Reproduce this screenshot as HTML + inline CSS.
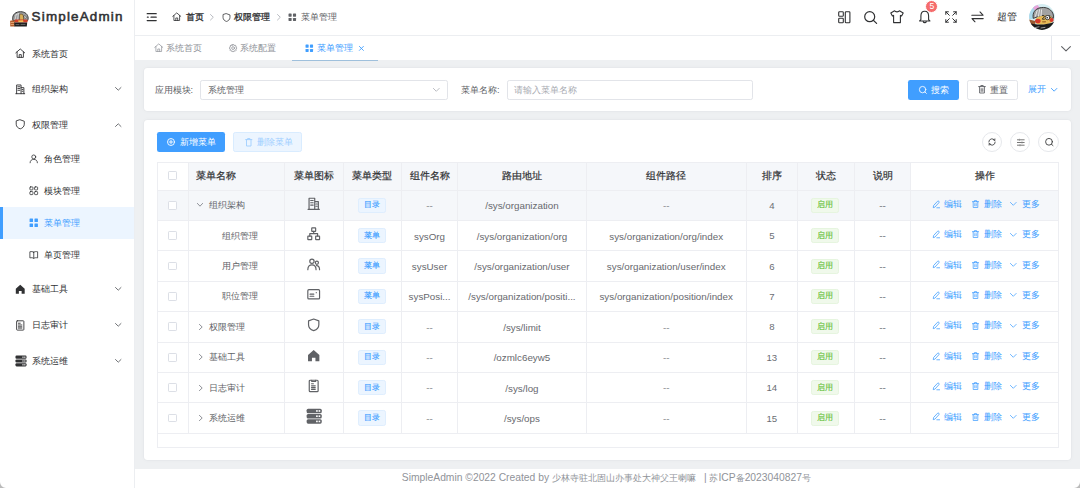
<!DOCTYPE html>
<html><head><meta charset="utf-8"><title>SimpleAdmin</title>
<style>
*{box-sizing:border-box;margin:0;padding:0}
html,body{width:1080px;height:488px;overflow:hidden}
body{position:relative;background:#eef0f2;font-family:"Liberation Sans", sans-serif;color:#606266}
.a{position:absolute}
.t{position:absolute;white-space:nowrap;line-height:12px;height:12px}
svg{position:absolute;overflow:visible}
.cj{display:inline-block;text-align:justify;text-align-last:justify;vertical-align:baseline;overflow:visible}
</style></head>
<body>
<div class="a" style="left:0.00px;top:0.00px;width:134.50px;height:488.00px;background:#fff;border-right:1px solid #eceef1"></div>
<svg style="left:9.80px;top:10.60px" width="18.4" height="15.6" viewBox="0 0 18.4 15.6" fill="none" stroke="none" stroke-width="1" stroke-linecap="round" stroke-linejoin="round">
<path d="M2.8 9 C2 5 4 1.5 9 0.8 C13.5 0.2 17.2 2.2 18 5.8 C18.4 7.5 18 9 17.6 9.6 L3.2 9.8 Z" fill="#9c9c9c" stroke="#2a2a2a" stroke-width="0.9"/>
<path d="M5 8.5 L6.2 3.6 M7.6 8.6 L8.4 2.8 M5.8 4 L8.6 2.4" stroke="#e8e8e8" stroke-width="0.7"/>
<path d="M10 3.2 C11.5 2.6 13.2 3.4 13.4 5 L13.6 9.6 L10 9.6 Z" fill="#d9b25a" stroke="#3a2a10" stroke-width="0.5"/>
<path d="M14 5 C15.2 4.6 16.4 5.4 16.3 6.6 C15.5 7.6 14.3 7.3 14 6.2 Z" fill="#f4f4f4" stroke="#222" stroke-width="0.5"/>
<rect x="4.6" y="8.6" width="13" height="3" rx="0.8" fill="#d2402a"/>
<path d="M8 9.4 L13 9.2 L13.5 11 L8.6 11.2 Z" fill="#f0c050"/>
<rect x="0.2" y="9.6" width="4.6" height="6" rx="0.6" fill="#b5602e"/>
<path d="M1.2 11.5 H3.6 M1.2 13.5 H3.6" stroke="#ffd0a0" stroke-width="0.6"/>
<path d="M4.2 11.6 H17.2 L16.8 15.4 H4.4 Z" fill="#1d1d1d"/>
<path d="M6 13.6 H9 M11 13.4 H15" stroke="#9a9a9a" stroke-width="0.6"/>
</svg>
<div class="t" style="left:31.60px;top:11.20px;font-size:13.4px;color:#303133;font-weight:normal;letter-spacing:1.2px;-webkit-text-stroke:0.55px #303133">SimpleAdmin</div>
<div class="a" style="left:0.00px;top:206.80px;width:134.00px;height:32.00px;background:#ecf5ff"></div>
<div class="a" style="left:0.00px;top:206.80px;width:2.80px;height:32.00px;background:#409eff"></div>
<svg style="left:15.00px;top:48.45px" width="10.5" height="10.5" viewBox="0 0 13 13" fill="none" stroke="#303133" stroke-width="1.1" stroke-linecap="round" stroke-linejoin="round"><path d="M1 6 L6.5 1.2 L12 6 M2.6 4.8 V11.6 H10.4 V4.8 M5.2 11.6 V8.2 H7.8 V11.6"/></svg>
<div class="t" style="left:31.50px;top:47.70px;font-size:9px;color:#303133;font-weight:normal;"><span class="cj" style="width:36px">系统首页</span></div>
<svg style="left:15.00px;top:83.65px" width="10.5" height="10.5" viewBox="0 0 13 13" fill="none" stroke="#303133" stroke-width="1.1" stroke-linecap="round" stroke-linejoin="round"><path d="M1 12 H12 M2 12 V1.2 H7.5 V12 M7.5 4.5 H11 V12 M3.6 3.4 H6 M3.6 5.6 H6 M3.6 7.8 H6 M8.8 6.8 H9.8 M8.8 9 H9.8"/></svg>
<div class="t" style="left:31.50px;top:82.90px;font-size:9px;color:#303133;font-weight:normal;"><span class="cj" style="width:36px">组织架构</span></div>
<svg style="left:114.50px;top:86.90px" width="6.5" height="4" viewBox="0 0 6.5 4" fill="none" stroke="#606266" stroke-width="0.9" stroke-linecap="round" stroke-linejoin="round"><path d="M0.5 0.5 L3.25 3.2 L6 0.5"/></svg>
<svg style="left:15.00px;top:119.45px" width="10.5" height="10.5" viewBox="0 0 13 13" fill="none" stroke="#303133" stroke-width="1.1" stroke-linecap="round" stroke-linejoin="round"><path d="M6.5 1 L11.5 2.8 V6.5 C11.5 9.5 9 11.5 6.5 12.2 C4 11.5 1.5 9.5 1.5 6.5 V2.8 Z"/></svg>
<div class="t" style="left:31.50px;top:118.70px;font-size:9px;color:#303133;font-weight:normal;"><span class="cj" style="width:36px">权限管理</span></div>
<svg style="left:114.50px;top:122.70px" width="6.5" height="4" viewBox="0 0 6.5 4" fill="none" stroke="#606266" stroke-width="0.9" stroke-linecap="round" stroke-linejoin="round"><path d="M0.5 3.5 L3.25 0.8 L6 3.5"/></svg>
<svg style="left:28.50px;top:153.85px" width="9.5" height="9.5" viewBox="0 0 13 13" fill="none" stroke="#303133" stroke-width="1.1" stroke-linecap="round" stroke-linejoin="round"><circle cx="6.5" cy="4" r="2.7"/><path d="M1.5 12 C1.5 8.8 3.6 7.4 6.5 7.4 C9.4 7.4 11.5 8.8 11.5 12"/></svg>
<div class="t" style="left:43.80px;top:152.60px;font-size:9px;color:#303133;font-weight:normal;"><span class="cj" style="width:36px">角色管理</span></div>
<svg style="left:28.50px;top:185.85px" width="9.5" height="9.5" viewBox="0 0 13 13" fill="none" stroke="#303133" stroke-width="1.1" stroke-linecap="round" stroke-linejoin="round"><rect x="1.2" y="1.2" width="4.2" height="4.2" rx="1"/><rect x="7.6" y="1.2" width="4.2" height="4.2" rx="1"/><rect x="1.2" y="7.6" width="4.2" height="4.2" rx="1"/><rect x="7.6" y="7.6" width="4.2" height="4.2" rx="1"/></svg>
<div class="t" style="left:43.80px;top:184.60px;font-size:9px;color:#303133;font-weight:normal;"><span class="cj" style="width:36px">模块管理</span></div>
<svg style="left:28.50px;top:217.75px" width="9.5" height="9.5" viewBox="0 0 13 13" fill="#409eff" stroke="#409eff" stroke-width="1.1" stroke-linecap="round" stroke-linejoin="round"><rect x="0.8" y="0.8" width="4.7" height="4.7" rx="0.7" stroke="none"/><rect x="7.5" y="0.8" width="4.7" height="4.7" rx="0.7" stroke="none"/><rect x="0.8" y="7.5" width="4.7" height="4.7" rx="0.7" stroke="none"/><rect x="7.5" y="7.5" width="4.7" height="4.7" rx="0.7" stroke="none"/></svg>
<div class="t" style="left:43.80px;top:216.50px;font-size:9px;color:#409eff;font-weight:normal;"><span class="cj" style="width:36px">菜单管理</span></div>
<svg style="left:28.50px;top:249.75px" width="9.5" height="9.5" viewBox="0 0 13 13" fill="none" stroke="#303133" stroke-width="1.1" stroke-linecap="round" stroke-linejoin="round"><path d="M6.5 3 C5 2 3 2 1.2 2.4 V10.8 C3 10.4 5 10.4 6.5 11.4 C8 10.4 10 10.4 11.8 10.8 V2.4 C10 2 8 2 6.5 3 Z M6.5 3 V11.4"/></svg>
<div class="t" style="left:43.80px;top:248.50px;font-size:9px;color:#303133;font-weight:normal;"><span class="cj" style="width:36px">单页管理</span></div>
<svg style="left:15.00px;top:283.95px" width="10.5" height="10.5" viewBox="0 0 13 13" fill="#303133" stroke="#303133" stroke-width="1.1" stroke-linecap="round" stroke-linejoin="round"><path d="M6.5 1 L12 5.8 V12 H8.2 V8.6 H4.8 V12 H1 V5.8 Z" stroke="none"/></svg>
<div class="t" style="left:31.50px;top:283.20px;font-size:9px;color:#303133;font-weight:normal;"><span class="cj" style="width:36px">基础工具</span></div>
<svg style="left:114.50px;top:287.20px" width="6.5" height="4" viewBox="0 0 6.5 4" fill="none" stroke="#606266" stroke-width="0.9" stroke-linecap="round" stroke-linejoin="round"><path d="M0.5 0.5 L3.25 3.2 L6 0.5"/></svg>
<svg style="left:15.00px;top:319.55px" width="10.5" height="10.5" viewBox="0 0 13 13" fill="none" stroke="#303133" stroke-width="1.1" stroke-linecap="round" stroke-linejoin="round"><rect x="2" y="1" width="9" height="11.5" rx="0.8"/><path d="M4.2 4 H6.5 M4.2 6.2 H8.5 M4.2 8.4 H8.5 M4.2 10 H8.5"/></svg>
<div class="t" style="left:31.50px;top:318.80px;font-size:9px;color:#303133;font-weight:normal;"><span class="cj" style="width:36px">日志审计</span></div>
<svg style="left:114.50px;top:322.80px" width="6.5" height="4" viewBox="0 0 6.5 4" fill="none" stroke="#606266" stroke-width="0.9" stroke-linecap="round" stroke-linejoin="round"><path d="M0.5 0.5 L3.25 3.2 L6 0.5"/></svg>
<svg style="left:14.80px;top:354.60px" width="12" height="12" viewBox="0 0 13 13" fill="#303133" stroke="#303133" stroke-width="1.1" stroke-linecap="round" stroke-linejoin="round"><rect x="0.5" y="0.6" width="12" height="3.5" rx="1.2" stroke="none"/><rect x="0.5" y="4.75" width="12" height="3.5" rx="1.2" stroke="none"/><rect x="0.5" y="8.9" width="12" height="3.5" rx="1.2" stroke="none"/><rect x="8.0" y="1.7" width="1.3" height="1.3" fill="#fff" stroke="none"/><rect x="10.0" y="1.7" width="1.3" height="1.3" fill="#fff" stroke="none"/><rect x="8.0" y="5.85" width="1.3" height="1.3" fill="#fff" stroke="none"/><rect x="10.0" y="5.85" width="1.3" height="1.3" fill="#fff" stroke="none"/><rect x="8.0" y="10.0" width="1.3" height="1.3" fill="#fff" stroke="none"/><rect x="10.0" y="10.0" width="1.3" height="1.3" fill="#fff" stroke="none"/></svg>
<div class="t" style="left:31.50px;top:354.60px;font-size:9px;color:#303133;font-weight:normal;"><span class="cj" style="width:36px">系统运维</span></div>
<svg style="left:114.50px;top:358.60px" width="6.5" height="4" viewBox="0 0 6.5 4" fill="none" stroke="#606266" stroke-width="0.9" stroke-linecap="round" stroke-linejoin="round"><path d="M0.5 0.5 L3.25 3.2 L6 0.5"/></svg>
<div class="a" style="left:134.50px;top:0.00px;width:945.50px;height:35.50px;background:#fff;border-bottom:1px solid #eceef1"></div>
<svg style="left:146.00px;top:12.70px" width="11" height="9" viewBox="0 0 11 9" fill="none" stroke="#303133" stroke-width="1.25" stroke-linecap="round" stroke-linejoin="round"><path d="M1.2 0.7 H10.2 M5 4.2 H10.2 M1.2 7.6 H10.2 M1.4 4.2 H2.2"/></svg>
<svg style="left:171.80px;top:12.45px" width="9.5" height="9.5" viewBox="0 0 13 13" fill="none" stroke="#303133" stroke-width="1.1" stroke-linecap="round" stroke-linejoin="round"><path d="M1 6 L6.5 1.2 L12 6 M2.6 4.8 V11.6 H10.4 V4.8 M5.2 11.6 V8.2 H7.8 V11.6"/></svg>
<div class="t" style="left:186.30px;top:11.40px;font-size:9px;color:#303133;font-weight:normal;-webkit-text-stroke:0.3px #303133"><span class="cj" style="width:18px">首页</span></div>
<svg style="left:210.40px;top:14.20px" width="4" height="6.5" viewBox="0 0 4 6.5" fill="none" stroke="#a8abb2" stroke-width="0.8" stroke-linecap="round" stroke-linejoin="round"><path d="M0.5 0.5 L3.3 3.25 L0.5 6"/></svg>
<svg style="left:221.50px;top:12.70px" width="9" height="9" viewBox="0 0 13 13" fill="none" stroke="#303133" stroke-width="1.1" stroke-linecap="round" stroke-linejoin="round"><path d="M6.5 1 L11.5 2.8 V6.5 C11.5 9.5 9 11.5 6.5 12.2 C4 11.5 1.5 9.5 1.5 6.5 V2.8 Z"/></svg>
<div class="t" style="left:234.40px;top:11.40px;font-size:9px;color:#303133;font-weight:normal;-webkit-text-stroke:0.3px #303133"><span class="cj" style="width:36px">权限管理</span></div>
<svg style="left:276.60px;top:14.20px" width="4" height="6.5" viewBox="0 0 4 6.5" fill="none" stroke="#a8abb2" stroke-width="0.8" stroke-linecap="round" stroke-linejoin="round"><path d="M0.5 0.5 L3.3 3.25 L0.5 6"/></svg>
<svg style="left:287.60px;top:12.90px" width="8.6" height="8.6" viewBox="0 0 13 13" fill="#606266" stroke="#606266" stroke-width="1.1" stroke-linecap="round" stroke-linejoin="round"><rect x="0.8" y="0.8" width="4.7" height="4.7" rx="0.7" stroke="none"/><rect x="7.5" y="0.8" width="4.7" height="4.7" rx="0.7" stroke="none"/><rect x="0.8" y="7.5" width="4.7" height="4.7" rx="0.7" stroke="none"/><rect x="7.5" y="7.5" width="4.7" height="4.7" rx="0.7" stroke="none"/></svg>
<div class="t" style="left:300.60px;top:11.40px;font-size:9px;color:#606266;font-weight:normal;"><span class="cj" style="width:36px">菜单管理</span></div>
<svg style="left:837.80px;top:11.00px" width="12.5" height="12.5" viewBox="0 0 12.5 12.5" fill="none" stroke="#303133" stroke-width="1.1" stroke-linecap="round" stroke-linejoin="round"><rect x="0.7" y="0.7" width="4.6" height="4.6" rx="0.8"/><rect x="0.7" y="7.2" width="4.6" height="4.6" rx="0.8"/><rect x="7.3" y="0.7" width="4.6" height="11.1" rx="0.8"/></svg>
<svg style="left:863.70px;top:11.00px" width="13.5" height="13" viewBox="0 0 13.5 13" fill="none" stroke="#303133" stroke-width="1.2" stroke-linecap="round" stroke-linejoin="round"><circle cx="5.7" cy="5.7" r="5"/><path d="M9.3 9.3 L12.6 12.4"/></svg>
<svg style="left:890.20px;top:9.80px" width="14" height="13.4" viewBox="0 0 14 13.4" fill="none" stroke="#303133" stroke-width="1.1" stroke-linecap="round" stroke-linejoin="round"><path d="M4.6 0.8 C5.2 2.2 8.8 2.2 9.4 0.8 L13.2 3 L11.6 6 L10.4 5.4 V12.6 H3.6 V5.4 L2.4 6 L0.8 3 Z"/></svg>
<svg style="left:919.00px;top:10.40px" width="11.5" height="13.4" viewBox="0 0 11.5 13.4" fill="none" stroke="#303133" stroke-width="1.1" stroke-linecap="round" stroke-linejoin="round"><path d="M5.75 1.2 C8.6 1.2 9.6 3.5 9.6 6 V9.6 L10.9 11 H0.6 L1.9 9.6 V6 C1.9 3.5 2.9 1.2 5.75 1.2 Z M4.3 11.8 C4.6 12.9 6.9 12.9 7.2 11.8"/></svg>
<div class="a" style="left:925.20px;top:0.00px;width:13.20px;height:13.20px;background:#f56c6c;border-radius:50%;border:1px solid #fff"></div>
<div class="t" style="left:925.8px;top:1.1px;width:12px;text-align:center;font-size:8.6px;line-height:11px;height:11px;color:#fff">5</div>
<svg style="left:945.00px;top:11.00px" width="12" height="12" viewBox="0 0 12 12" fill="none" stroke="#303133" stroke-width="1.0" stroke-linecap="round" stroke-linejoin="round"><path d="M0.8 3.4 V0.8 H3.4 M0.8 0.8 L4.3 4.3 M8.6 0.8 H11.2 V3.4 M11.2 0.8 L7.7 4.3 M0.8 8.6 V11.2 H3.4 M0.8 11.2 L4.3 7.7 M11.2 8.6 V11.2 H8.6 M11.2 11.2 L7.7 7.7"/></svg>
<svg style="left:971.00px;top:11.40px" width="13" height="11.7" viewBox="0 0 13 11.7" fill="none" stroke="#303133" stroke-width="1.1" stroke-linecap="round" stroke-linejoin="round"><path d="M0.8 4.2 H12 L9 1 M12.2 7.6 H1 L4 10.8"/></svg>
<div class="t" style="left:996.70px;top:11.20px;font-size:9.5px;color:#303133;font-weight:normal;"><span class="cj" style="width:20px">超管</span></div>
<svg style="left:1029.10px;top:4.20px" width="26" height="26" viewBox="0 0 26 26" fill="none" stroke="none" stroke-width="1" stroke-linecap="round" stroke-linejoin="round">
<defs><clipPath id="avc"><circle cx="13" cy="13" r="12.9"/></clipPath></defs>
<g clip-path="url(#avc)">
<rect x="0" y="0" width="26" height="26" fill="#d6eef2"/>
<path d="M0 3 L6 0 L10 6 L4 15 L0 15 Z" fill="#a9d7ea"/>
<path d="M3.6 3.4 L8.4 0.8 L11.2 4.6 L6.6 7 Z" fill="#e8a4da"/>
<path d="M4.2 14 C3.2 8.6 6.2 5 11 3.8 C15.6 2.8 20 4 22.6 7.2 C24.6 9.6 24.8 12.6 24.2 14.6 L20.6 11.6 L14 12.4 L9 12.8 Z" fill="#a2a2a2" stroke="#2c2c2c" stroke-width="0.9"/>
<path d="M6.4 12.4 L8.2 6.4 M9.4 12.4 L10.6 5.6 M12 11.8 L12.6 5.8" stroke="#ececec" stroke-width="0.9"/>
<path d="M7 14.4 C9.6 11.4 17 10.6 22.4 12.4 L23.2 18 C19 21.4 10.4 21.4 7 19.2 Z" fill="#e6bb58"/>
<ellipse cx="18.6" cy="13.6" rx="2.4" ry="2.1" fill="#fafafa" stroke="#1e1e1e" stroke-width="0.8"/>
<circle cx="18.2" cy="13.8" r="0.8" fill="#111"/>
<path d="M13.2 11.6 C14.4 10.8 15.6 11.8 15.2 13 C14.4 13.8 13.4 14 13.4 15.2 L15.4 15.2" stroke="#222" stroke-width="0.9" fill="none"/>
<ellipse cx="8.8" cy="17" rx="2.8" ry="2.3" fill="#d63a2a"/>
<ellipse cx="22.6" cy="16" rx="2.1" ry="2.1" fill="#d63a2a"/>
<path d="M13 17.2 L17 17 L16.6 18.6 L13.4 18.6 Z" fill="#a8702a"/>
<path d="M0 15.6 L6.4 17 L6.2 22.4 L0 22.4 Z" fill="#9a5a32"/>
<path d="M2.4 19.4 C9 21.2 18 21 26 17.4 L26 26 L0 26 L0 21.4 Z" fill="#1b1b1b"/>
<path d="M6 23.6 L10 22.8 M12 24 L16 23.4" stroke="#cfcfcf" stroke-width="0.7"/>
</g>
</svg>
<div class="a" style="left:134.50px;top:35.50px;width:945.50px;height:24.10px;background:#fff"></div>
<div class="a" style="left:1051.20px;top:35.50px;width:1.00px;height:24.10px;background:#e4e7ed"></div>
<svg style="left:1061.00px;top:45.60px" width="10" height="5.6" viewBox="0 0 10 5.6" fill="none" stroke="#606266" stroke-width="1.1" stroke-linecap="round" stroke-linejoin="round"><path d="M0.6 0.6 L5 4.9 L9.4 0.6"/></svg>
<svg style="left:154.40px;top:43.45px" width="9.5" height="9.5" viewBox="0 0 13 13" fill="none" stroke="#909399" stroke-width="1.0" stroke-linecap="round" stroke-linejoin="round"><path d="M1 6 L6.5 1.2 L12 6 M2.6 4.8 V11.6 H10.4 V4.8 M5.2 11.6 V8.2 H7.8 V11.6"/></svg>
<div class="t" style="left:166.40px;top:41.80px;font-size:9px;color:#909399;font-weight:normal;"><span class="cj" style="width:36px">系统首页</span></div>
<svg style="left:228.60px;top:43.90px" width="8.2" height="8.2" viewBox="0 0 8.2 8.2" fill="none" stroke="#909399" stroke-width="0.8" stroke-linecap="round" stroke-linejoin="round"><path d="M3.3 0.6 H4.9 L5.2 1.6 L6.2 1.1 L7.2 2.1 L6.7 3.1 L7.6 3.4 V4.9 L6.7 5.2 L7.2 6.2 L6.2 7.2 L5.2 6.7 L4.9 7.6 H3.3 L3 6.7 L2 7.2 L1 6.2 L1.5 5.2 L0.6 4.9 V3.3 L1.5 3 L1 2 L2 1 L3 1.5 Z"/><circle cx="4.1" cy="4.1" r="1.4"/></svg>
<div class="t" style="left:239.70px;top:41.80px;font-size:9px;color:#909399;font-weight:normal;"><span class="cj" style="width:36px">系统配置</span></div>
<svg style="left:305.40px;top:43.90px" width="8.6" height="8.6" viewBox="0 0 13 13" fill="#409eff" stroke="#409eff" stroke-width="1.1" stroke-linecap="round" stroke-linejoin="round"><rect x="0.8" y="0.8" width="4.7" height="4.7" rx="0.7" stroke="none"/><rect x="7.5" y="0.8" width="4.7" height="4.7" rx="0.7" stroke="none"/><rect x="0.8" y="7.5" width="4.7" height="4.7" rx="0.7" stroke="none"/><rect x="7.5" y="7.5" width="4.7" height="4.7" rx="0.7" stroke="none"/></svg>
<div class="t" style="left:316.80px;top:41.80px;font-size:9px;color:#409eff;font-weight:normal;"><span class="cj" style="width:36px">菜单管理</span></div>
<svg style="left:359.30px;top:45.60px" width="4.8" height="4.8" viewBox="0 0 4.8 4.8" fill="none" stroke="#409eff" stroke-width="0.9" stroke-linecap="round" stroke-linejoin="round"><path d="M0.4 0.4 L4.4 4.4 M4.4 0.4 L0.4 4.4"/></svg>
<div class="a" style="left:292.20px;top:59.80px;width:85.40px;height:1.40px;background:#9fc0dc"></div>
<div class="a" style="left:143.80px;top:68.30px;width:927.20px;height:43.00px;background:#fff;border-radius:3.4px;box-shadow:0 0 0 0.6px #e4e6e9,0 0 5px rgba(0,0,0,0.035)"></div>
<div class="t" style="left:154.50px;top:83.70px;font-size:9px;color:#606266;font-weight:normal;"><span class="cj" style="width:36px">应用模块</span>:</div>
<div class="a" style="left:200.00px;top:79.80px;width:247.50px;height:19.80px;background:#fff;border:1px solid #e2e4e9;border-radius:2.3px"></div>
<div class="t" style="left:207.50px;top:83.60px;font-size:9px;color:#606266;font-weight:normal;"><span class="cj" style="width:36px">系统管理</span></div>
<svg style="left:433.20px;top:88.20px" width="6.6" height="3.8" viewBox="0 0 6.6 3.8" fill="none" stroke="#a8abb2" stroke-width="0.8" stroke-linecap="round" stroke-linejoin="round"><path d="M0.4 0.4 L3.3 3.3 L6.2 0.4"/></svg>
<div class="t" style="left:461.00px;top:83.70px;font-size:9px;color:#606266;font-weight:normal;"><span class="cj" style="width:36px">菜单名称</span>:</div>
<div class="a" style="left:506.70px;top:79.80px;width:246.80px;height:19.80px;background:#fff;border:1px solid #e2e4e9;border-radius:2.3px"></div>
<div class="t" style="left:514.00px;top:83.60px;font-size:9px;color:#a8abb2;font-weight:normal;"><span class="cj" style="width:63px">请输入菜单名称</span></div>
<div class="a" style="left:908.00px;top:79.50px;width:50.80px;height:20.00px;background:#409eff;border-radius:2.3px"></div>
<svg style="left:919.00px;top:85.60px" width="8" height="8" viewBox="0 0 8 8" fill="none" stroke="#fff" stroke-width="0.85" stroke-linecap="round" stroke-linejoin="round"><circle cx="3.6" cy="3.6" r="3.2"/><path d="M5.9 5.9 L7.4 7.4"/></svg>
<div class="t" style="left:930.80px;top:83.50px;font-size:9px;color:#fff;font-weight:normal;"><span class="cj" style="width:18px">搜索</span></div>
<div class="a" style="left:967.20px;top:79.50px;width:50.80px;height:20.00px;background:#fff;border:1px solid #e2e4e9;border-radius:2.3px"></div>
<svg style="left:978.30px;top:85.40px" width="8" height="8.5" viewBox="0 0 8 8.5" fill="none" stroke="#606266" stroke-width="0.9" stroke-linecap="round" stroke-linejoin="round"><path d="M0.6 1.6 H7.4 M2.8 1.6 V0.5 H5.2 V1.6 M1.6 1.6 V8 H6.4 V1.6 M3.2 3.6 V6.4 M4.8 3.6 V6.4"/></svg>
<div class="t" style="left:990.00px;top:83.50px;font-size:9px;color:#606266;font-weight:normal;"><span class="cj" style="width:18px">重置</span></div>
<div class="t" style="left:1028.30px;top:83.20px;font-size:9px;color:#409eff;font-weight:normal;"><span class="cj" style="width:18px">展开</span></div>
<svg style="left:1050.80px;top:88.20px" width="6.3" height="3.6" viewBox="0 0 6.3 3.6" fill="none" stroke="#409eff" stroke-width="0.9" stroke-linecap="round" stroke-linejoin="round"><path d="M0.4 0.4 L3.15 3.2 L5.9 0.4"/></svg>
<div class="a" style="left:143.80px;top:119.90px;width:927.20px;height:340.60px;background:#fff;border-radius:3.4px;box-shadow:0 0 0 0.6px #e4e6e9,0 0 5px rgba(0,0,0,0.035)"></div>
<div class="a" style="left:156.60px;top:132.00px;width:68.80px;height:20.10px;background:#409eff;border-radius:2.3px"></div>
<svg style="left:167.00px;top:138.20px" width="8" height="8" viewBox="0 0 8 8" fill="none" stroke="#fff" stroke-width="0.9" stroke-linecap="round" stroke-linejoin="round"><circle cx="4" cy="4" r="3.5"/><path d="M4 2.2 V5.8 M2.2 4 H5.8"/></svg>
<div class="t" style="left:179.70px;top:136.00px;font-size:9px;color:#fff;font-weight:normal;"><span class="cj" style="width:36px">新增菜单</span></div>
<div class="a" style="left:233.20px;top:132.00px;width:69.20px;height:20.10px;background:#ecf5ff;border:1px solid #d9ecff;border-radius:2.3px"></div>
<svg style="left:244.50px;top:137.80px" width="7.5" height="8.5" viewBox="0 0 7.5 8.5" fill="none" stroke="#a0cfff" stroke-width="0.9" stroke-linecap="round" stroke-linejoin="round"><path d="M0.6 1.6 H6.9 M2.6 1.6 V0.5 H4.9 V1.6 M1.5 1.6 V8 H6 V1.6"/></svg>
<div class="t" style="left:256.50px;top:136.00px;font-size:9px;color:#a0cfff;font-weight:normal;"><span class="cj" style="width:36px">删除菜单</span></div>
<div class="a" style="left:981.80px;top:131.90px;width:20.20px;height:20.20px;border:1px solid #e6e8ec;border-radius:50%"></div>
<div class="a" style="left:1010.20px;top:131.90px;width:20.20px;height:20.20px;border:1px solid #e6e8ec;border-radius:50%"></div>
<div class="a" style="left:1038.40px;top:131.90px;width:20.20px;height:20.20px;border:1px solid #e6e8ec;border-radius:50%"></div>
<svg style="left:988.00px;top:138.20px" width="8" height="8" viewBox="0 0 8 8" fill="none" stroke="#303133" stroke-width="0.8" stroke-linecap="round" stroke-linejoin="round"><path d="M0.8 4 A3.2 3.2 0 0 1 6.77 2.4 M6.9 0.9 L6.77 2.4 L5.41 1.77 M7.2 4 A3.2 3.2 0 0 1 1.23 5.6 M1.1 7.1 L1.23 5.6 L2.59 6.23"/></svg>
<svg style="left:1016.60px;top:139.00px" width="7.6" height="7" viewBox="0 0 7.6 7" fill="none" stroke="#303133" stroke-width="0.8" stroke-linecap="round" stroke-linejoin="round"><path d="M0.4 0.8 H7.2 M0.4 3.5 H7.2 M0.4 6.2 H7.2" stroke="#555" stroke-width="0.8"/><path d="M2.4 0.1 V1.5 M5 2.8 V4.2 M3 5.5 V6.9" stroke="#888" stroke-width="0.7"/></svg>
<svg style="left:1044.60px;top:138.40px" width="8.6" height="8" viewBox="0 0 8.6 8" fill="none" stroke="#303133" stroke-width="0.85" stroke-linecap="round" stroke-linejoin="round"><circle cx="4" cy="3.8" r="3.4"/><path d="M6.5 6.3 L8 7.6"/></svg>
<div class="a" style="left:188.30px;top:162.10px;width:722.50px;height:27.90px;background:#f5f7fa"></div>
<div class="a" style="left:156.60px;top:190.00px;width:902.00px;height:30.41px;background:#f5f7fa"></div>
<div class="a" style="left:156.60px;top:162.10px;width:902.00px;height:285.50px;border:1px solid #edeef2"></div>
<div class="a" style="left:156.60px;top:189.50px;width:902.00px;height:1.00px;background:#edeef2"></div>
<div class="a" style="left:156.60px;top:219.91px;width:902.00px;height:1.00px;background:#edeef2"></div>
<div class="a" style="left:156.60px;top:250.32px;width:902.00px;height:1.00px;background:#edeef2"></div>
<div class="a" style="left:156.60px;top:280.73px;width:902.00px;height:1.00px;background:#edeef2"></div>
<div class="a" style="left:156.60px;top:311.14px;width:902.00px;height:1.00px;background:#edeef2"></div>
<div class="a" style="left:156.60px;top:341.55px;width:902.00px;height:1.00px;background:#edeef2"></div>
<div class="a" style="left:156.60px;top:371.96px;width:902.00px;height:1.00px;background:#edeef2"></div>
<div class="a" style="left:156.60px;top:402.37px;width:902.00px;height:1.00px;background:#edeef2"></div>
<div class="a" style="left:156.60px;top:432.78px;width:902.00px;height:1.00px;background:#edeef2"></div>
<div class="a" style="left:187.80px;top:162.10px;width:1.00px;height:271.18px;background:#edeef2"></div>
<div class="a" style="left:283.90px;top:162.10px;width:1.00px;height:271.18px;background:#edeef2"></div>
<div class="a" style="left:343.00px;top:162.10px;width:1.00px;height:271.18px;background:#edeef2"></div>
<div class="a" style="left:400.80px;top:162.10px;width:1.00px;height:271.18px;background:#edeef2"></div>
<div class="a" style="left:457.30px;top:162.10px;width:1.00px;height:271.18px;background:#edeef2"></div>
<div class="a" style="left:585.60px;top:162.10px;width:1.00px;height:271.18px;background:#edeef2"></div>
<div class="a" style="left:745.80px;top:162.10px;width:1.00px;height:271.18px;background:#edeef2"></div>
<div class="a" style="left:796.90px;top:162.10px;width:1.00px;height:271.18px;background:#edeef2"></div>
<div class="a" style="left:853.70px;top:162.10px;width:1.00px;height:271.18px;background:#edeef2"></div>
<div class="a" style="left:910.30px;top:162.10px;width:1.00px;height:271.18px;background:#edeef2"></div>
<div class="a" style="left:167.90px;top:171.20px;width:8.80px;height:8.80px;background:#fff;border:1px solid #dcdfe6;border-radius:1.2px"></div>
<div class="t" style="left:195.80px;top:170.20px;font-size:9.6px;color:#303133;font-weight:normal;-webkit-text-stroke:0.2px #303133"><span class="cj" style="width:40px">菜单名称</span></div>
<div class="t" style="left:273.95px;top:170.20px;width:80px;text-align:center;font-size:9.6px;color:#303133;font-weight:normal;-webkit-text-stroke:0.2px #303133"><span class="cj" style="width:40px">菜单图标</span></div>
<div class="t" style="left:332.40px;top:170.20px;width:80px;text-align:center;font-size:9.6px;color:#303133;font-weight:normal;-webkit-text-stroke:0.2px #303133"><span class="cj" style="width:40px">菜单类型</span></div>
<div class="t" style="left:389.55px;top:170.20px;width:80px;text-align:center;font-size:9.6px;color:#303133;font-weight:normal;-webkit-text-stroke:0.2px #303133"><span class="cj" style="width:40px">组件名称</span></div>
<div class="t" style="left:481.95px;top:170.20px;width:80px;text-align:center;font-size:9.6px;color:#303133;font-weight:normal;-webkit-text-stroke:0.2px #303133"><span class="cj" style="width:40px">路由地址</span></div>
<div class="t" style="left:626.20px;top:170.20px;width:80px;text-align:center;font-size:9.6px;color:#303133;font-weight:normal;-webkit-text-stroke:0.2px #303133"><span class="cj" style="width:40px">组件路径</span></div>
<div class="t" style="left:731.85px;top:170.20px;width:80px;text-align:center;font-size:9.6px;color:#303133;font-weight:normal;-webkit-text-stroke:0.2px #303133"><span class="cj" style="width:20px">排序</span></div>
<div class="t" style="left:785.80px;top:170.20px;width:80px;text-align:center;font-size:9.6px;color:#303133;font-weight:normal;-webkit-text-stroke:0.2px #303133"><span class="cj" style="width:20px">状态</span></div>
<div class="t" style="left:842.50px;top:170.20px;width:80px;text-align:center;font-size:9.6px;color:#303133;font-weight:normal;-webkit-text-stroke:0.2px #303133"><span class="cj" style="width:20px">说明</span></div>
<div class="t" style="left:944.70px;top:170.20px;width:80px;text-align:center;font-size:9.6px;color:#303133;font-weight:normal;-webkit-text-stroke:0.2px #303133"><span class="cj" style="width:20px">操作</span></div>
<div class="a" style="left:167.90px;top:200.81px;width:8.80px;height:8.80px;background:#fff;border:1px solid #dcdfe6;border-radius:1.2px"></div>
<svg style="left:197.20px;top:203.41px" width="6" height="3.6" viewBox="0 0 6 3.6" fill="none" stroke="#83868c" stroke-width="0.9" stroke-linecap="round" stroke-linejoin="round"><path d="M0.4 0.4 L3 3.2 L5.6 0.4"/></svg>
<div class="t" style="left:209.00px;top:199.21px;font-size:9px;color:#606266;font-weight:normal;"><span class="cj" style="width:36px">组织架构</span></div>
<svg style="left:306.90px;top:196.61px" width="13.4" height="13.4" viewBox="0 0 13 13" fill="none" stroke="#606266" stroke-width="1.15" stroke-linecap="round" stroke-linejoin="round"><path d="M1 12 H12 M2 12 V1.2 H7.5 V12 M7.5 4.5 H11 V12 M3.6 3.4 H6 M3.6 5.6 H6 M3.6 7.8 H6 M8.8 6.8 H9.8 M8.8 9 H9.8"/></svg>
<div class="a" style="left:358.20px;top:197.61px;width:27.90px;height:15.20px;background:#ecf5ff;border:1px solid #dfeefe;border-radius:2.3px"></div>
<div class="t" style="left:358.15px;top:199.21px;width:28px;text-align:center;font-size:7.6px;color:#409eff;font-weight:normal;-webkit-text-stroke:0.15px #409eff"><span class="cj" style="width:16px">目录</span></div>
<div class="t" style="left:401.55px;top:200.01px;width:56px;text-align:center;font-size:9.8px;color:#85888d;font-weight:normal;">--</div>
<div class="t" style="left:457.95px;top:200.21px;width:128px;text-align:center;font-size:9.8px;color:#67696e;font-weight:normal;">/sys/organization</div>
<div class="t" style="left:586.20px;top:200.01px;width:160px;text-align:center;font-size:9.8px;color:#85888d;font-weight:normal;">--</div>
<div class="t" style="left:746.85px;top:199.71px;width:50px;text-align:center;font-size:9.6px;color:#6b6e73;font-weight:normal;">4</div>
<div class="a" style="left:811.10px;top:197.71px;width:28.30px;height:15.00px;background:#f0f9eb;border:1px solid #e6f5df;border-radius:2.3px"></div>
<div class="t" style="left:811.25px;top:199.21px;width:28px;text-align:center;font-size:7.6px;color:#67c23a;font-weight:normal;-webkit-text-stroke:0.15px #67c23a"><span class="cj" style="width:16px">启用</span></div>
<div class="t" style="left:854.50px;top:200.01px;width:56px;text-align:center;font-size:10px;color:#85888d;font-weight:normal;">--</div>
<svg style="left:931.60px;top:199.61px" width="8" height="8.4" viewBox="0 0 8 8.4" fill="none" stroke="#409eff" stroke-width="0.8" stroke-linecap="round" stroke-linejoin="round"><path d="M1.3 7.3 L1.6 5.5 L5.5 1.3 C5.9 0.9 6.5 0.9 6.9 1.3 C7.3 1.7 7.3 2.3 6.9 2.7 L3.1 6.9 Z M4.8 7.8 H7.6"/></svg>
<div class="t" style="left:944.00px;top:197.81px;font-size:9px;color:#409eff;font-weight:normal;"><span class="cj" style="width:18px">编辑</span></div>
<svg style="left:972.00px;top:199.91px" width="7" height="8" viewBox="0 0 7 8" fill="none" stroke="#409eff" stroke-width="0.75" stroke-linecap="round" stroke-linejoin="round"><path d="M0.4 1.7 H6.6 M2.4 1.7 V0.6 H4.6 V1.7 M1.2 1.7 V7.5 H5.8 V1.7 M2.8 3.6 V5.8 M4.2 3.6 V5.8"/></svg>
<div class="t" style="left:984.20px;top:197.81px;font-size:9px;color:#409eff;font-weight:normal;"><span class="cj" style="width:18px">删除</span></div>
<svg style="left:1010.00px;top:202.21px" width="6.6" height="3.8" viewBox="0 0 6.6 3.8" fill="none" stroke="#409eff" stroke-width="0.75" stroke-linecap="round" stroke-linejoin="round"><path d="M0.4 0.4 L3.3 3.3 L6.2 0.4"/></svg>
<div class="t" style="left:1022.40px;top:197.81px;font-size:9px;color:#409eff;font-weight:normal;"><span class="cj" style="width:18px">更多</span></div>
<div class="a" style="left:167.90px;top:231.22px;width:8.80px;height:8.80px;background:#fff;border:1px solid #dcdfe6;border-radius:1.2px"></div>
<div class="t" style="left:221.60px;top:229.62px;font-size:9px;color:#606266;font-weight:normal;"><span class="cj" style="width:36px">组织管理</span></div>
<svg style="left:306.90px;top:227.02px" width="13.4" height="13.4" viewBox="0 0 13 13" fill="none" stroke="#606266" stroke-width="1.15" stroke-linecap="round" stroke-linejoin="round"><rect x="4.6" y="0.8" width="3.8" height="3.4" rx="0.4"/><rect x="0.8" y="8.8" width="3.8" height="3.4" rx="0.4"/><rect x="8.4" y="8.8" width="3.8" height="3.4" rx="0.4"/><path d="M6.5 4.2 V6.5 M2.7 8.8 V6.5 H10.3 V8.8"/></svg>
<div class="a" style="left:358.20px;top:228.02px;width:27.90px;height:15.20px;background:#ecf5ff;border:1px solid #dfeefe;border-radius:2.3px"></div>
<div class="t" style="left:358.15px;top:229.62px;width:28px;text-align:center;font-size:7.6px;color:#409eff;font-weight:normal;-webkit-text-stroke:0.15px #409eff"><span class="cj" style="width:16px">菜单</span></div>
<div class="t" style="left:401.55px;top:230.62px;width:56px;text-align:center;font-size:9.8px;color:#67696e;font-weight:normal;">sysOrg</div>
<div class="t" style="left:457.95px;top:230.62px;width:128px;text-align:center;font-size:9.8px;color:#67696e;font-weight:normal;">/sys/organization/org</div>
<div class="t" style="left:586.20px;top:230.62px;width:160px;text-align:center;font-size:9.8px;color:#67696e;font-weight:normal;">sys/organization/org/index</div>
<div class="t" style="left:746.85px;top:230.12px;width:50px;text-align:center;font-size:9.6px;color:#6b6e73;font-weight:normal;">5</div>
<div class="a" style="left:811.10px;top:228.12px;width:28.30px;height:15.00px;background:#f0f9eb;border:1px solid #e6f5df;border-radius:2.3px"></div>
<div class="t" style="left:811.25px;top:229.62px;width:28px;text-align:center;font-size:7.6px;color:#67c23a;font-weight:normal;-webkit-text-stroke:0.15px #67c23a"><span class="cj" style="width:16px">启用</span></div>
<div class="t" style="left:854.50px;top:230.42px;width:56px;text-align:center;font-size:10px;color:#85888d;font-weight:normal;">--</div>
<svg style="left:931.60px;top:230.02px" width="8" height="8.4" viewBox="0 0 8 8.4" fill="none" stroke="#409eff" stroke-width="0.8" stroke-linecap="round" stroke-linejoin="round"><path d="M1.3 7.3 L1.6 5.5 L5.5 1.3 C5.9 0.9 6.5 0.9 6.9 1.3 C7.3 1.7 7.3 2.3 6.9 2.7 L3.1 6.9 Z M4.8 7.8 H7.6"/></svg>
<div class="t" style="left:944.00px;top:228.22px;font-size:9px;color:#409eff;font-weight:normal;"><span class="cj" style="width:18px">编辑</span></div>
<svg style="left:972.00px;top:230.31px" width="7" height="8" viewBox="0 0 7 8" fill="none" stroke="#409eff" stroke-width="0.75" stroke-linecap="round" stroke-linejoin="round"><path d="M0.4 1.7 H6.6 M2.4 1.7 V0.6 H4.6 V1.7 M1.2 1.7 V7.5 H5.8 V1.7 M2.8 3.6 V5.8 M4.2 3.6 V5.8"/></svg>
<div class="t" style="left:984.20px;top:228.22px;font-size:9px;color:#409eff;font-weight:normal;"><span class="cj" style="width:18px">删除</span></div>
<svg style="left:1010.00px;top:232.62px" width="6.6" height="3.8" viewBox="0 0 6.6 3.8" fill="none" stroke="#409eff" stroke-width="0.75" stroke-linecap="round" stroke-linejoin="round"><path d="M0.4 0.4 L3.3 3.3 L6.2 0.4"/></svg>
<div class="t" style="left:1022.40px;top:228.22px;font-size:9px;color:#409eff;font-weight:normal;"><span class="cj" style="width:18px">更多</span></div>
<div class="a" style="left:167.90px;top:261.62px;width:8.80px;height:8.80px;background:#fff;border:1px solid #dcdfe6;border-radius:1.2px"></div>
<div class="t" style="left:221.60px;top:260.02px;font-size:9px;color:#606266;font-weight:normal;"><span class="cj" style="width:36px">用户管理</span></div>
<svg style="left:306.90px;top:258.12px" width="13.4" height="13.4" viewBox="0 0 13 13" fill="none" stroke="#606266" stroke-width="1.15" stroke-linecap="round" stroke-linejoin="round"><circle cx="4.8" cy="3.2" r="2.1"/><path d="M0.8 11.4 C0.8 8 2.6 6.6 4.8 6.6 C7 6.6 8.8 8 8.8 11.4"/><circle cx="9.6" cy="4.6" r="1.5"/><path d="M9.2 7.4 C11 7.4 12.2 8.6 12.2 11.4"/></svg>
<div class="a" style="left:358.20px;top:258.42px;width:27.90px;height:15.20px;background:#ecf5ff;border:1px solid #dfeefe;border-radius:2.3px"></div>
<div class="t" style="left:358.15px;top:260.02px;width:28px;text-align:center;font-size:7.6px;color:#409eff;font-weight:normal;-webkit-text-stroke:0.15px #409eff"><span class="cj" style="width:16px">菜单</span></div>
<div class="t" style="left:401.55px;top:261.02px;width:56px;text-align:center;font-size:9.8px;color:#67696e;font-weight:normal;">sysUser</div>
<div class="t" style="left:457.95px;top:261.02px;width:128px;text-align:center;font-size:9.8px;color:#67696e;font-weight:normal;">/sys/organization/user</div>
<div class="t" style="left:586.20px;top:261.02px;width:160px;text-align:center;font-size:9.8px;color:#67696e;font-weight:normal;">sys/organization/user/index</div>
<div class="t" style="left:746.85px;top:260.52px;width:50px;text-align:center;font-size:9.6px;color:#6b6e73;font-weight:normal;">6</div>
<div class="a" style="left:811.10px;top:258.52px;width:28.30px;height:15.00px;background:#f0f9eb;border:1px solid #e6f5df;border-radius:2.3px"></div>
<div class="t" style="left:811.25px;top:260.02px;width:28px;text-align:center;font-size:7.6px;color:#67c23a;font-weight:normal;-webkit-text-stroke:0.15px #67c23a"><span class="cj" style="width:16px">启用</span></div>
<div class="t" style="left:854.50px;top:260.82px;width:56px;text-align:center;font-size:10px;color:#85888d;font-weight:normal;">--</div>
<svg style="left:931.60px;top:260.43px" width="8" height="8.4" viewBox="0 0 8 8.4" fill="none" stroke="#409eff" stroke-width="0.8" stroke-linecap="round" stroke-linejoin="round"><path d="M1.3 7.3 L1.6 5.5 L5.5 1.3 C5.9 0.9 6.5 0.9 6.9 1.3 C7.3 1.7 7.3 2.3 6.9 2.7 L3.1 6.9 Z M4.8 7.8 H7.6"/></svg>
<div class="t" style="left:944.00px;top:258.62px;font-size:9px;color:#409eff;font-weight:normal;"><span class="cj" style="width:18px">编辑</span></div>
<svg style="left:972.00px;top:260.73px" width="7" height="8" viewBox="0 0 7 8" fill="none" stroke="#409eff" stroke-width="0.75" stroke-linecap="round" stroke-linejoin="round"><path d="M0.4 1.7 H6.6 M2.4 1.7 V0.6 H4.6 V1.7 M1.2 1.7 V7.5 H5.8 V1.7 M2.8 3.6 V5.8 M4.2 3.6 V5.8"/></svg>
<div class="t" style="left:984.20px;top:258.62px;font-size:9px;color:#409eff;font-weight:normal;"><span class="cj" style="width:18px">删除</span></div>
<svg style="left:1010.00px;top:263.02px" width="6.6" height="3.8" viewBox="0 0 6.6 3.8" fill="none" stroke="#409eff" stroke-width="0.75" stroke-linecap="round" stroke-linejoin="round"><path d="M0.4 0.4 L3.3 3.3 L6.2 0.4"/></svg>
<div class="t" style="left:1022.40px;top:258.62px;font-size:9px;color:#409eff;font-weight:normal;"><span class="cj" style="width:18px">更多</span></div>
<div class="a" style="left:167.90px;top:292.04px;width:8.80px;height:8.80px;background:#fff;border:1px solid #dcdfe6;border-radius:1.2px"></div>
<div class="t" style="left:221.60px;top:290.44px;font-size:9px;color:#606266;font-weight:normal;"><span class="cj" style="width:36px">职位管理</span></div>
<svg style="left:306.90px;top:287.84px" width="13.4" height="13.4" viewBox="0 0 13 13" fill="none" stroke="#606266" stroke-width="1.15" stroke-linecap="round" stroke-linejoin="round"><rect x="0.8" y="1.6" width="11.4" height="9" rx="1"/><path d="M3 6 H6.6 M3 8 H6.6 M9 4.4 V4.6"/></svg>
<div class="a" style="left:358.20px;top:288.83px;width:27.90px;height:15.20px;background:#ecf5ff;border:1px solid #dfeefe;border-radius:2.3px"></div>
<div class="t" style="left:358.15px;top:290.44px;width:28px;text-align:center;font-size:7.6px;color:#409eff;font-weight:normal;-webkit-text-stroke:0.15px #409eff"><span class="cj" style="width:16px">菜单</span></div>
<div class="t" style="left:401.55px;top:291.44px;width:56px;text-align:center;font-size:9.8px;color:#67696e;font-weight:normal;">sysPosi...</div>
<div class="t" style="left:457.95px;top:291.44px;width:128px;text-align:center;font-size:9.8px;color:#67696e;font-weight:normal;">/sys/organization/positi...</div>
<div class="t" style="left:586.20px;top:291.44px;width:160px;text-align:center;font-size:9.8px;color:#67696e;font-weight:normal;">sys/organization/position/index</div>
<div class="t" style="left:746.85px;top:290.94px;width:50px;text-align:center;font-size:9.6px;color:#6b6e73;font-weight:normal;">7</div>
<div class="a" style="left:811.10px;top:288.94px;width:28.30px;height:15.00px;background:#f0f9eb;border:1px solid #e6f5df;border-radius:2.3px"></div>
<div class="t" style="left:811.25px;top:290.44px;width:28px;text-align:center;font-size:7.6px;color:#67c23a;font-weight:normal;-webkit-text-stroke:0.15px #67c23a"><span class="cj" style="width:16px">启用</span></div>
<div class="t" style="left:854.50px;top:291.24px;width:56px;text-align:center;font-size:10px;color:#85888d;font-weight:normal;">--</div>
<svg style="left:931.60px;top:290.84px" width="8" height="8.4" viewBox="0 0 8 8.4" fill="none" stroke="#409eff" stroke-width="0.8" stroke-linecap="round" stroke-linejoin="round"><path d="M1.3 7.3 L1.6 5.5 L5.5 1.3 C5.9 0.9 6.5 0.9 6.9 1.3 C7.3 1.7 7.3 2.3 6.9 2.7 L3.1 6.9 Z M4.8 7.8 H7.6"/></svg>
<div class="t" style="left:944.00px;top:289.04px;font-size:9px;color:#409eff;font-weight:normal;"><span class="cj" style="width:18px">编辑</span></div>
<svg style="left:972.00px;top:291.14px" width="7" height="8" viewBox="0 0 7 8" fill="none" stroke="#409eff" stroke-width="0.75" stroke-linecap="round" stroke-linejoin="round"><path d="M0.4 1.7 H6.6 M2.4 1.7 V0.6 H4.6 V1.7 M1.2 1.7 V7.5 H5.8 V1.7 M2.8 3.6 V5.8 M4.2 3.6 V5.8"/></svg>
<div class="t" style="left:984.20px;top:289.04px;font-size:9px;color:#409eff;font-weight:normal;"><span class="cj" style="width:18px">删除</span></div>
<svg style="left:1010.00px;top:293.44px" width="6.6" height="3.8" viewBox="0 0 6.6 3.8" fill="none" stroke="#409eff" stroke-width="0.75" stroke-linecap="round" stroke-linejoin="round"><path d="M0.4 0.4 L3.3 3.3 L6.2 0.4"/></svg>
<div class="t" style="left:1022.40px;top:289.04px;font-size:9px;color:#409eff;font-weight:normal;"><span class="cj" style="width:18px">更多</span></div>
<div class="a" style="left:167.90px;top:322.44px;width:8.80px;height:8.80px;background:#fff;border:1px solid #dcdfe6;border-radius:1.2px"></div>
<svg style="left:198.60px;top:323.84px" width="3.6" height="6" viewBox="0 0 3.6 6" fill="none" stroke="#83868c" stroke-width="0.9" stroke-linecap="round" stroke-linejoin="round"><path d="M0.4 0.4 L3.2 3 L0.4 5.6"/></svg>
<div class="t" style="left:209.00px;top:320.84px;font-size:9px;color:#606266;font-weight:normal;"><span class="cj" style="width:36px">权限管理</span></div>
<svg style="left:306.90px;top:318.25px" width="13.4" height="13.4" viewBox="0 0 13 13" fill="none" stroke="#606266" stroke-width="1.15" stroke-linecap="round" stroke-linejoin="round"><path d="M6.5 1 L11.5 2.8 V6.5 C11.5 9.5 9 11.5 6.5 12.2 C4 11.5 1.5 9.5 1.5 6.5 V2.8 Z"/></svg>
<div class="a" style="left:358.20px;top:319.24px;width:27.90px;height:15.20px;background:#ecf5ff;border:1px solid #dfeefe;border-radius:2.3px"></div>
<div class="t" style="left:358.15px;top:320.84px;width:28px;text-align:center;font-size:7.6px;color:#409eff;font-weight:normal;-webkit-text-stroke:0.15px #409eff"><span class="cj" style="width:16px">目录</span></div>
<div class="t" style="left:401.55px;top:321.64px;width:56px;text-align:center;font-size:9.8px;color:#85888d;font-weight:normal;">--</div>
<div class="t" style="left:457.95px;top:321.84px;width:128px;text-align:center;font-size:9.8px;color:#67696e;font-weight:normal;">/sys/limit</div>
<div class="t" style="left:586.20px;top:321.64px;width:160px;text-align:center;font-size:9.8px;color:#85888d;font-weight:normal;">--</div>
<div class="t" style="left:746.85px;top:321.34px;width:50px;text-align:center;font-size:9.6px;color:#6b6e73;font-weight:normal;">8</div>
<div class="a" style="left:811.10px;top:319.34px;width:28.30px;height:15.00px;background:#f0f9eb;border:1px solid #e6f5df;border-radius:2.3px"></div>
<div class="t" style="left:811.25px;top:320.84px;width:28px;text-align:center;font-size:7.6px;color:#67c23a;font-weight:normal;-webkit-text-stroke:0.15px #67c23a"><span class="cj" style="width:16px">启用</span></div>
<div class="t" style="left:854.50px;top:321.64px;width:56px;text-align:center;font-size:10px;color:#85888d;font-weight:normal;">--</div>
<svg style="left:931.60px;top:321.25px" width="8" height="8.4" viewBox="0 0 8 8.4" fill="none" stroke="#409eff" stroke-width="0.8" stroke-linecap="round" stroke-linejoin="round"><path d="M1.3 7.3 L1.6 5.5 L5.5 1.3 C5.9 0.9 6.5 0.9 6.9 1.3 C7.3 1.7 7.3 2.3 6.9 2.7 L3.1 6.9 Z M4.8 7.8 H7.6"/></svg>
<div class="t" style="left:944.00px;top:319.44px;font-size:9px;color:#409eff;font-weight:normal;"><span class="cj" style="width:18px">编辑</span></div>
<svg style="left:972.00px;top:321.55px" width="7" height="8" viewBox="0 0 7 8" fill="none" stroke="#409eff" stroke-width="0.75" stroke-linecap="round" stroke-linejoin="round"><path d="M0.4 1.7 H6.6 M2.4 1.7 V0.6 H4.6 V1.7 M1.2 1.7 V7.5 H5.8 V1.7 M2.8 3.6 V5.8 M4.2 3.6 V5.8"/></svg>
<div class="t" style="left:984.20px;top:319.44px;font-size:9px;color:#409eff;font-weight:normal;"><span class="cj" style="width:18px">删除</span></div>
<svg style="left:1010.00px;top:323.84px" width="6.6" height="3.8" viewBox="0 0 6.6 3.8" fill="none" stroke="#409eff" stroke-width="0.75" stroke-linecap="round" stroke-linejoin="round"><path d="M0.4 0.4 L3.3 3.3 L6.2 0.4"/></svg>
<div class="t" style="left:1022.40px;top:319.44px;font-size:9px;color:#409eff;font-weight:normal;"><span class="cj" style="width:18px">更多</span></div>
<div class="a" style="left:167.90px;top:352.86px;width:8.80px;height:8.80px;background:#fff;border:1px solid #dcdfe6;border-radius:1.2px"></div>
<svg style="left:198.60px;top:354.25px" width="3.6" height="6" viewBox="0 0 3.6 6" fill="none" stroke="#83868c" stroke-width="0.9" stroke-linecap="round" stroke-linejoin="round"><path d="M0.4 0.4 L3.2 3 L0.4 5.6"/></svg>
<div class="t" style="left:209.00px;top:351.25px;font-size:9px;color:#606266;font-weight:normal;"><span class="cj" style="width:36px">基础工具</span></div>
<svg style="left:306.90px;top:348.66px" width="13.4" height="13.4" viewBox="0 0 13 13" fill="#606266" stroke="#606266" stroke-width="1.15" stroke-linecap="round" stroke-linejoin="round"><path d="M6.5 1 L12 5.8 V12 H8.2 V8.6 H4.8 V12 H1 V5.8 Z" stroke="none"/></svg>
<div class="a" style="left:358.20px;top:349.65px;width:27.90px;height:15.20px;background:#ecf5ff;border:1px solid #dfeefe;border-radius:2.3px"></div>
<div class="t" style="left:358.15px;top:351.25px;width:28px;text-align:center;font-size:7.6px;color:#409eff;font-weight:normal;-webkit-text-stroke:0.15px #409eff"><span class="cj" style="width:16px">目录</span></div>
<div class="t" style="left:401.55px;top:352.06px;width:56px;text-align:center;font-size:9.8px;color:#85888d;font-weight:normal;">--</div>
<div class="t" style="left:457.95px;top:352.25px;width:128px;text-align:center;font-size:9.8px;color:#67696e;font-weight:normal;">/ozmlc6eyw5</div>
<div class="t" style="left:586.20px;top:352.06px;width:160px;text-align:center;font-size:9.8px;color:#85888d;font-weight:normal;">--</div>
<div class="t" style="left:746.85px;top:351.75px;width:50px;text-align:center;font-size:9.6px;color:#6b6e73;font-weight:normal;">13</div>
<div class="a" style="left:811.10px;top:349.75px;width:28.30px;height:15.00px;background:#f0f9eb;border:1px solid #e6f5df;border-radius:2.3px"></div>
<div class="t" style="left:811.25px;top:351.25px;width:28px;text-align:center;font-size:7.6px;color:#67c23a;font-weight:normal;-webkit-text-stroke:0.15px #67c23a"><span class="cj" style="width:16px">启用</span></div>
<div class="t" style="left:854.50px;top:352.06px;width:56px;text-align:center;font-size:10px;color:#85888d;font-weight:normal;">--</div>
<svg style="left:931.60px;top:351.66px" width="8" height="8.4" viewBox="0 0 8 8.4" fill="none" stroke="#409eff" stroke-width="0.8" stroke-linecap="round" stroke-linejoin="round"><path d="M1.3 7.3 L1.6 5.5 L5.5 1.3 C5.9 0.9 6.5 0.9 6.9 1.3 C7.3 1.7 7.3 2.3 6.9 2.7 L3.1 6.9 Z M4.8 7.8 H7.6"/></svg>
<div class="t" style="left:944.00px;top:349.86px;font-size:9px;color:#409eff;font-weight:normal;"><span class="cj" style="width:18px">编辑</span></div>
<svg style="left:972.00px;top:351.96px" width="7" height="8" viewBox="0 0 7 8" fill="none" stroke="#409eff" stroke-width="0.75" stroke-linecap="round" stroke-linejoin="round"><path d="M0.4 1.7 H6.6 M2.4 1.7 V0.6 H4.6 V1.7 M1.2 1.7 V7.5 H5.8 V1.7 M2.8 3.6 V5.8 M4.2 3.6 V5.8"/></svg>
<div class="t" style="left:984.20px;top:349.86px;font-size:9px;color:#409eff;font-weight:normal;"><span class="cj" style="width:18px">删除</span></div>
<svg style="left:1010.00px;top:354.25px" width="6.6" height="3.8" viewBox="0 0 6.6 3.8" fill="none" stroke="#409eff" stroke-width="0.75" stroke-linecap="round" stroke-linejoin="round"><path d="M0.4 0.4 L3.3 3.3 L6.2 0.4"/></svg>
<div class="t" style="left:1022.40px;top:349.86px;font-size:9px;color:#409eff;font-weight:normal;"><span class="cj" style="width:18px">更多</span></div>
<div class="a" style="left:167.90px;top:383.27px;width:8.80px;height:8.80px;background:#fff;border:1px solid #dcdfe6;border-radius:1.2px"></div>
<svg style="left:198.60px;top:384.67px" width="3.6" height="6" viewBox="0 0 3.6 6" fill="none" stroke="#83868c" stroke-width="0.9" stroke-linecap="round" stroke-linejoin="round"><path d="M0.4 0.4 L3.2 3 L0.4 5.6"/></svg>
<div class="t" style="left:209.00px;top:381.67px;font-size:9px;color:#606266;font-weight:normal;"><span class="cj" style="width:36px">日志审计</span></div>
<svg style="left:306.90px;top:379.07px" width="13.4" height="13.4" viewBox="0 0 13 13" fill="none" stroke="#606266" stroke-width="1.15" stroke-linecap="round" stroke-linejoin="round"><rect x="2.2" y="1.2" width="8.6" height="11" rx="0.9"/><path d="M4.6 1.2 V2.4 H8.4 V1.2 M4.4 4.6 H6.2 M4.4 6.6 H8 M4.4 8.4 H8 M4.4 10 H8"/></svg>
<div class="a" style="left:358.20px;top:380.06px;width:27.90px;height:15.20px;background:#ecf5ff;border:1px solid #dfeefe;border-radius:2.3px"></div>
<div class="t" style="left:358.15px;top:381.67px;width:28px;text-align:center;font-size:7.6px;color:#409eff;font-weight:normal;-webkit-text-stroke:0.15px #409eff"><span class="cj" style="width:16px">目录</span></div>
<div class="t" style="left:401.55px;top:382.47px;width:56px;text-align:center;font-size:9.8px;color:#85888d;font-weight:normal;">--</div>
<div class="t" style="left:457.95px;top:382.67px;width:128px;text-align:center;font-size:9.8px;color:#67696e;font-weight:normal;">/sys/log</div>
<div class="t" style="left:586.20px;top:382.47px;width:160px;text-align:center;font-size:9.8px;color:#85888d;font-weight:normal;">--</div>
<div class="t" style="left:746.85px;top:382.17px;width:50px;text-align:center;font-size:9.6px;color:#6b6e73;font-weight:normal;">14</div>
<div class="a" style="left:811.10px;top:380.17px;width:28.30px;height:15.00px;background:#f0f9eb;border:1px solid #e6f5df;border-radius:2.3px"></div>
<div class="t" style="left:811.25px;top:381.67px;width:28px;text-align:center;font-size:7.6px;color:#67c23a;font-weight:normal;-webkit-text-stroke:0.15px #67c23a"><span class="cj" style="width:16px">启用</span></div>
<div class="t" style="left:854.50px;top:382.47px;width:56px;text-align:center;font-size:10px;color:#85888d;font-weight:normal;">--</div>
<svg style="left:931.60px;top:382.07px" width="8" height="8.4" viewBox="0 0 8 8.4" fill="none" stroke="#409eff" stroke-width="0.8" stroke-linecap="round" stroke-linejoin="round"><path d="M1.3 7.3 L1.6 5.5 L5.5 1.3 C5.9 0.9 6.5 0.9 6.9 1.3 C7.3 1.7 7.3 2.3 6.9 2.7 L3.1 6.9 Z M4.8 7.8 H7.6"/></svg>
<div class="t" style="left:944.00px;top:380.27px;font-size:9px;color:#409eff;font-weight:normal;"><span class="cj" style="width:18px">编辑</span></div>
<svg style="left:972.00px;top:382.37px" width="7" height="8" viewBox="0 0 7 8" fill="none" stroke="#409eff" stroke-width="0.75" stroke-linecap="round" stroke-linejoin="round"><path d="M0.4 1.7 H6.6 M2.4 1.7 V0.6 H4.6 V1.7 M1.2 1.7 V7.5 H5.8 V1.7 M2.8 3.6 V5.8 M4.2 3.6 V5.8"/></svg>
<div class="t" style="left:984.20px;top:380.27px;font-size:9px;color:#409eff;font-weight:normal;"><span class="cj" style="width:18px">删除</span></div>
<svg style="left:1010.00px;top:384.67px" width="6.6" height="3.8" viewBox="0 0 6.6 3.8" fill="none" stroke="#409eff" stroke-width="0.75" stroke-linecap="round" stroke-linejoin="round"><path d="M0.4 0.4 L3.3 3.3 L6.2 0.4"/></svg>
<div class="t" style="left:1022.40px;top:380.27px;font-size:9px;color:#409eff;font-weight:normal;"><span class="cj" style="width:18px">更多</span></div>
<div class="a" style="left:167.90px;top:413.68px;width:8.80px;height:8.80px;background:#fff;border:1px solid #dcdfe6;border-radius:1.2px"></div>
<svg style="left:198.60px;top:415.07px" width="3.6" height="6" viewBox="0 0 3.6 6" fill="none" stroke="#83868c" stroke-width="0.9" stroke-linecap="round" stroke-linejoin="round"><path d="M0.4 0.4 L3.2 3 L0.4 5.6"/></svg>
<div class="t" style="left:209.00px;top:412.07px;font-size:9px;color:#606266;font-weight:normal;"><span class="cj" style="width:36px">系统运维</span></div>
<svg style="left:305.70px;top:408.48px" width="16.4" height="16.4" viewBox="0 0 13 13" fill="#606266" stroke="#606266" stroke-width="1.15" stroke-linecap="round" stroke-linejoin="round"><rect x="0.5" y="0.6" width="12" height="3.5" rx="1.2" stroke="none"/><rect x="0.5" y="4.75" width="12" height="3.5" rx="1.2" stroke="none"/><rect x="0.5" y="8.9" width="12" height="3.5" rx="1.2" stroke="none"/><rect x="8.0" y="1.7" width="1.3" height="1.3" fill="#fff" stroke="none"/><rect x="10.0" y="1.7" width="1.3" height="1.3" fill="#fff" stroke="none"/><rect x="8.0" y="5.85" width="1.3" height="1.3" fill="#fff" stroke="none"/><rect x="10.0" y="5.85" width="1.3" height="1.3" fill="#fff" stroke="none"/><rect x="8.0" y="10.0" width="1.3" height="1.3" fill="#fff" stroke="none"/><rect x="10.0" y="10.0" width="1.3" height="1.3" fill="#fff" stroke="none"/></svg>
<div class="a" style="left:358.20px;top:410.47px;width:27.90px;height:15.20px;background:#ecf5ff;border:1px solid #dfeefe;border-radius:2.3px"></div>
<div class="t" style="left:358.15px;top:412.07px;width:28px;text-align:center;font-size:7.6px;color:#409eff;font-weight:normal;-webkit-text-stroke:0.15px #409eff"><span class="cj" style="width:16px">目录</span></div>
<div class="t" style="left:401.55px;top:412.88px;width:56px;text-align:center;font-size:9.8px;color:#85888d;font-weight:normal;">--</div>
<div class="t" style="left:457.95px;top:413.07px;width:128px;text-align:center;font-size:9.8px;color:#67696e;font-weight:normal;">/sys/ops</div>
<div class="t" style="left:586.20px;top:412.88px;width:160px;text-align:center;font-size:9.8px;color:#85888d;font-weight:normal;">--</div>
<div class="t" style="left:746.85px;top:412.57px;width:50px;text-align:center;font-size:9.6px;color:#6b6e73;font-weight:normal;">15</div>
<div class="a" style="left:811.10px;top:410.57px;width:28.30px;height:15.00px;background:#f0f9eb;border:1px solid #e6f5df;border-radius:2.3px"></div>
<div class="t" style="left:811.25px;top:412.07px;width:28px;text-align:center;font-size:7.6px;color:#67c23a;font-weight:normal;-webkit-text-stroke:0.15px #67c23a"><span class="cj" style="width:16px">启用</span></div>
<div class="t" style="left:854.50px;top:412.88px;width:56px;text-align:center;font-size:10px;color:#85888d;font-weight:normal;">--</div>
<svg style="left:931.60px;top:412.48px" width="8" height="8.4" viewBox="0 0 8 8.4" fill="none" stroke="#409eff" stroke-width="0.8" stroke-linecap="round" stroke-linejoin="round"><path d="M1.3 7.3 L1.6 5.5 L5.5 1.3 C5.9 0.9 6.5 0.9 6.9 1.3 C7.3 1.7 7.3 2.3 6.9 2.7 L3.1 6.9 Z M4.8 7.8 H7.6"/></svg>
<div class="t" style="left:944.00px;top:410.68px;font-size:9px;color:#409eff;font-weight:normal;"><span class="cj" style="width:18px">编辑</span></div>
<svg style="left:972.00px;top:412.78px" width="7" height="8" viewBox="0 0 7 8" fill="none" stroke="#409eff" stroke-width="0.75" stroke-linecap="round" stroke-linejoin="round"><path d="M0.4 1.7 H6.6 M2.4 1.7 V0.6 H4.6 V1.7 M1.2 1.7 V7.5 H5.8 V1.7 M2.8 3.6 V5.8 M4.2 3.6 V5.8"/></svg>
<div class="t" style="left:984.20px;top:410.68px;font-size:9px;color:#409eff;font-weight:normal;"><span class="cj" style="width:18px">删除</span></div>
<svg style="left:1010.00px;top:415.07px" width="6.6" height="3.8" viewBox="0 0 6.6 3.8" fill="none" stroke="#409eff" stroke-width="0.75" stroke-linecap="round" stroke-linejoin="round"><path d="M0.4 0.4 L3.3 3.3 L6.2 0.4"/></svg>
<div class="t" style="left:1022.40px;top:410.68px;font-size:9px;color:#409eff;font-weight:normal;"><span class="cj" style="width:18px">更多</span></div>
<div class="a" style="left:134.50px;top:468.70px;width:945.50px;height:19.30px;background:#fff"></div>
<div class="t" style="left:401.80px;top:472.30px;font-size:10.3px;color:#909399;font-weight:normal;">SimpleAdmin ©2022 Created by <span style="font-size:9.25px"><span class="cj" style="width:144px">少林寺驻北固山办事处大神父王喇嘛</span></span><span style="margin-left:8px">|</span> <span style="font-size:9.25px"><span class="cj" style="width:9px">苏</span></span>ICP<span style="font-size:9.25px"><span class="cj" style="width:9px">备</span></span>2023040827<span style="font-size:9.25px"><span class="cj" style="width:9px">号</span></span></div>
<svg style="left:0;top:476px" width="12" height="12" viewBox="0 0 12 12"><path d="M0 6 L0 12 L6 12 A6 6 0 0 1 0 6 Z" fill="#8c8c8c" fill-opacity="0.6"/></svg>
<svg style="left:1068px;top:476px" width="12" height="12" viewBox="0 0 12 12"><path d="M12 6 L12 12 L6 12 A6 6 0 0 0 12 6 Z" fill="#8c8c8c" fill-opacity="0.6"/></svg>
</body></html>
